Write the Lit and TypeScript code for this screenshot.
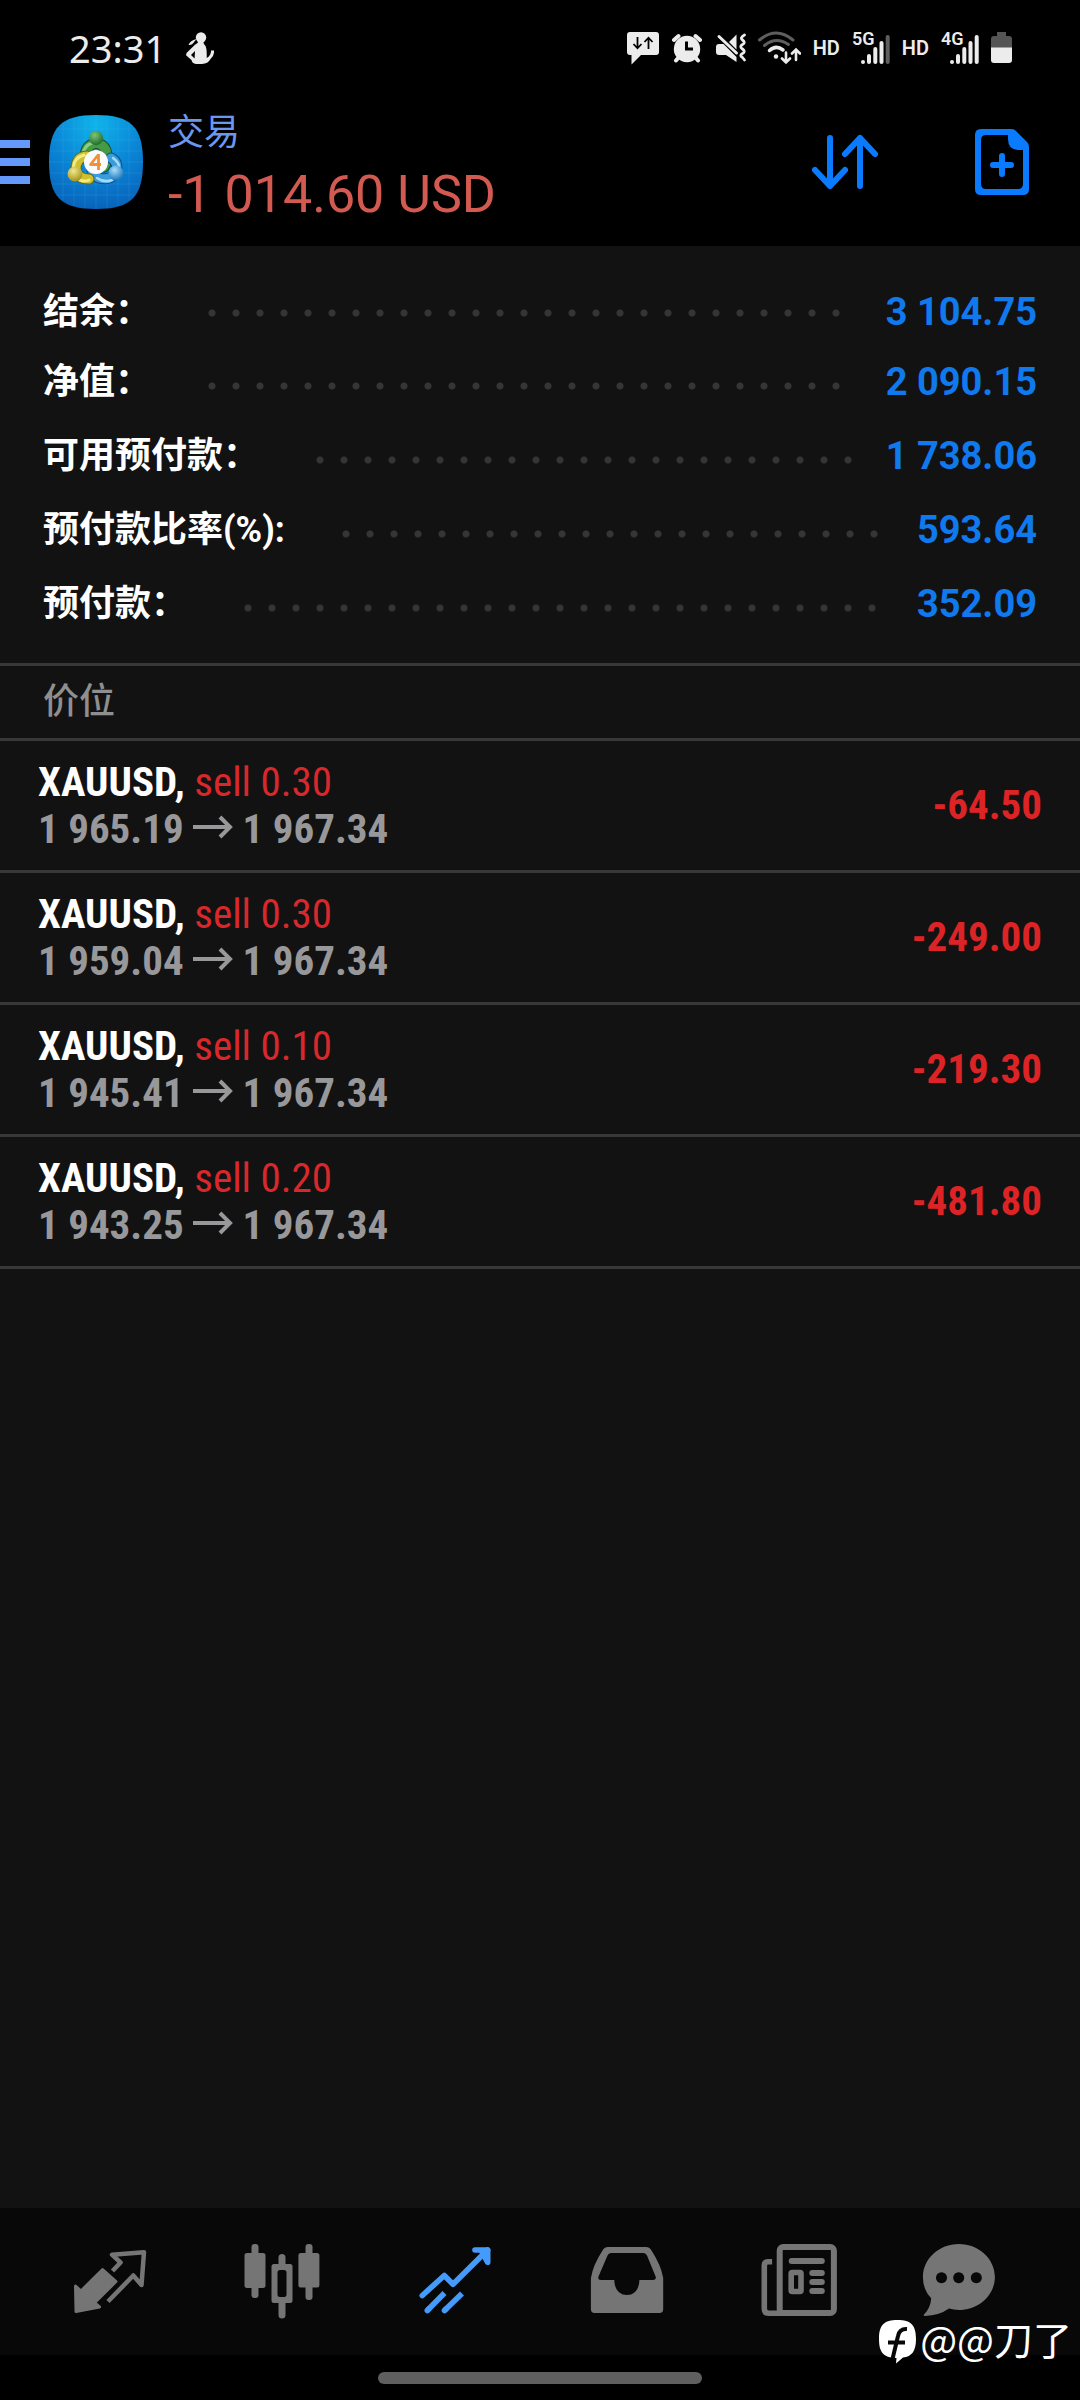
import { LitElement, html, css, svg } from "lit";
import { customElement } from "lit/decorators.js";

interface SummaryRow {
  label: string;
  value: string;
}

interface Position {
  symbol: string;
  side: string;
  volume: string;
  open: string;
  current: string;
  profit: string;
}

const SUMMARY: SummaryRow[] = [
  { label: "结余：", value: "3 104.75" },
  { label: "净值：", value: "2 090.15" },
  { label: "可用预付款：", value: "1 738.06" },
  { label: "预付款比率(%):", value: "593.64" },
  { label: "预付款：", value: "352.09" },
];

const POSITIONS: Position[] = [
  { symbol: "XAUUSD,", side: "sell", volume: "0.30", open: "1 965.19", current: "1 967.34", profit: "-64.50" },
  { symbol: "XAUUSD,", side: "sell", volume: "0.30", open: "1 959.04", current: "1 967.34", profit: "-249.00" },
  { symbol: "XAUUSD,", side: "sell", volume: "0.10", open: "1 945.41", current: "1 967.34", profit: "-219.30" },
  { symbol: "XAUUSD,", side: "sell", volume: "0.20", open: "1 943.25", current: "1 967.34", profit: "-481.80" },
];

const NAV = [
  {
    label: "行情",
    active: false,
    icon: svg`
      <path fill="currentColor" stroke="currentColor" stroke-width="3" stroke-linejoin="round"
        d="M15.500 54 L21 59 L42.600 37.600 L56 49.500 L34.600 70.700 L39.500 75 L16 79.500 Z"/>
      <path fill="none" stroke="currentColor" stroke-width="4.500" stroke-linecap="butt" stroke-linejoin="round"
        d="M52.500 39 L60.500 30.500 L52 22.700 L84 20.200 L81.500 53 L73.300 43.500 L48 69.500"/>`,
  },
  {
    label: "图表",
    active: false,
    icon: svg`
      <g fill="currentColor">
        <rect x="12.500" y="21" width="21" height="35" rx="2.500"/><rect x="19.500" y="12" width="7" height="54" rx="3"/>
        <rect x="66.400" y="21" width="21" height="34.500" rx="2.500"/><rect x="73.500" y="12" width="7" height="56" rx="3"/>
        <path d="M42 32 H46.500 V25.500 a3.500 3.500 0 0 1 7 0 V32 H58 a2.500 2.500 0 0 1 2.500 2.500 V68.500 a2.500 2.500 0 0 1 -2.500 2.500 H53.500 V83 a3.500 3.500 0 0 1 -7 0 V71 H42 a2.500 2.500 0 0 1 -2.500 -2.500 V34.500 A2.500 2.500 0 0 1 42 32 Z M48 38 a2.500 2.500 0 0 0 -2.500 2.500 V62.500 a2.500 2.500 0 0 0 2.500 2.500 h4 a2.500 2.500 0 0 0 2.500 -2.500 V40.500 a2.500 2.500 0 0 0 -2.500 -2.500 Z" fill-rule="evenodd"/>
      </g>`,
  },
  {
    label: "交易",
    active: true,
    icon: svg`
      <g fill="none" stroke="currentColor" stroke-width="5.600" stroke-linecap="round" stroke-linejoin="round">
        <path d="M17.300 63.500 L39.300 43.500 L48 52.300 L82.500 18"/>
        <path d="M70 18 H82.700 V30.300 L77 20"/>
        <path d="M22.300 78.500 L24 76.800"/><path d="M39.500 78.500 L41 77"/>
      </g>
      <g fill="none" stroke="currentColor" stroke-width="5.600">
        <path d="M22.300 78.500 L39.500 61"/><path d="M39.500 78.500 L57 61.500"/>
      </g>`,
  },
  {
    label: "历史",
    active: false,
    icon: svg`
      <path fill="currentColor" fill-rule="evenodd"
        d="M31 15 H69 Q72.500 15 74.200 18 Q84 33 86.200 46 V77 Q86.200 81 82.500 81 H17.600 Q13.900 81 13.900 77 V46 Q16 33 25.800 18 Q27.500 15 31 15 Z
           M34 21 Q31.500 21 30.500 23.500 L21.500 44.500 Q20.600 48 24 48 H37.300 C37.500 57 42 63 50 63 S62 57 62.400 48 H76 Q79.600 48 78.600 44.500 L70 23.500 Q69 21 66.500 21 Z"/>`,
  },
  {
    label: "新闻",
    active: false,
    icon: svg`
      <g fill="none" stroke="currentColor">
        <rect x="30.700" y="15" width="54.200" height="66" rx="3.500" stroke-width="6"/>
        <path stroke-width="5.600" d="M23.100 29.800 H19 Q15.300 29.800 15.300 34 V77 Q15.300 81.200 20 81.200 H34"/>
        <rect x="42.200" y="40.500" width="9.800" height="19" rx="1" stroke-width="5.600"/>
        <g stroke-width="6" stroke-linecap="round">
          <path d="M42.700 29 H72.800"/><path d="M63.300 41 H72.800"/><path d="M63.300 50 H72.800"/><path d="M63.300 59 H72.800"/>
        </g>
      </g>`,
  },
  {
    label: "消息",
    active: false,
    icon: svg`
      <path fill="currentColor" fill-rule="evenodd"
        d="M36.900 12 C56.800 12 72.900 26.800 72.900 45 S56.800 78 36.900 78 Q31.500 78 27 76.600 Q17 83.800 3 84 Q.5 84 2.600 81.700 Q8.500 76 9.200 66.300 Q.9 57.500 .9 45 C.9 26.800 17 12 36.900 12 Z
           M19.500 40.200 a5.500 5.500 0 1 0 .01 0 Z M36.700 40.200 a5.500 5.500 0 1 0 .01 0 Z M54.300 40.200 a5.500 5.500 0 1 0 .01 0 Z"/>`,
  },
];

@customElement("status-bar")
export class StatusBar extends LitElement {
  static styles = css`
    :host { display: block; }
    .bar {
      display: flex;
      align-items: center;
      justify-content: space-between;
      height: 96px;
      padding: 0 68px 0 69px;
      color: #ececec;
      font-family: "Noto Sans", Roboto, sans-serif;
    }
    .side { display: flex; align-items: center; gap: 12px; }
    .time { font-size: 38px; line-height: 48px; }
    .left { gap: 20px; }
    .hd { font: 600 20px/32px Roboto, "Liberation Sans", sans-serif; }
    svg { display: block; flex: none; }
    .net { font: 600 18px Roboto, "Liberation Sans", sans-serif; }
  `;

  private signal(name: string, lastOpacity: number) {
    return html`<svg width="38" height="46" viewBox="0 -6 38 46" role="img" aria-label="${name}">
      <text class="net" x="0" y="14" fill="currentColor">${name}</text>
      <g stroke="currentColor" stroke-width="4" stroke-linecap="round">
        <path d="M11 31 v.01"/><path d="M17 25 V31"/><path d="M23.300 18 V31"/><path d="M29.500 12 V31"/>
        <path d="M35.700 6 V31" stroke-opacity="${lastOpacity}"/>
      </g>
    </svg>`;
  }

  render() {
    return html`
      <div class="bar">
        <div class="side left">
          <span class="time">23:31</span>
          <svg width="28" height="32" viewBox="0 0 28 32" fill="currentColor" aria-hidden="true">
            <circle cx="15" cy="5.500" r="5.200"/>
            <path d="M10.500 7 Q4 8.500 2.500 13 Q6 13.500 8.500 9.500 Z"/>
            <path d="M12.500 9 h4.500 q.5 3 2.500 5 q1.500 3 1.200 12 q4.500 -2.500 4.300 -7.500 h3 q.5 5.500 -3.500 8.500 q-2.500 4.800 -8.500 5 H10 q-4 -.5 -4.500 -4 L.300 23.500 q-.5 -1.500 .7 -3 L9 12.800 q3 -1 3.500 -3.800 Z M9 19 L5 23 L8.600 26.500 Z" fill-rule="evenodd"/>
          </svg>
        </div>
        <div class="side">
          <svg width="33" height="34" viewBox="0 0 33 34" aria-hidden="true">
            <path fill="currentColor" d="M3 1 H29 Q32 1 32 4 V21 Q32 24 29 24 H14 L4.500 33.500 V24 H3 Q0 24 0 21 V4 Q0 1 3 1 Z"/>
            <path fill="none" stroke="#000" stroke-width="1.800" d="M10.500 6 V17 M6.500 13 L10.500 17.300 L14.500 13 M21.500 18 V7 M17.500 11 L21.500 6.700 L25.500 11"/>
          </svg>
          <svg width="30" height="34" viewBox="0 0 30 34" aria-hidden="true">
            <g fill="none" stroke="currentColor" stroke-width="4" stroke-linecap="round">
              <path d="M2 9 L6.500 5 M28 9 L23.500 5 M7 26 L4 29.500 M23 26 L26 29.500"/>
            </g>
            <circle cx="15" cy="18" r="13.200" fill="currentColor"/>
            <path d="M14.500 10.500 V18 H21" fill="none" stroke="#000" stroke-width="3"/>
          </svg>
          <svg width="32" height="34" viewBox="0 0 32 34" aria-hidden="true">
            <path fill="currentColor" d="M15 11 L22.500 3.500 V18.500 Z M5 13 H9.500 L22.500 26 V31 L12 24 H5 Q2 24 2 21 V16 Q2 13 5 13 Z"/>
            <path fill="none" stroke="currentColor" stroke-width="3" stroke-linecap="round" d="M5 5.500 L22.500 22"/>
            <path fill="none" stroke="currentColor" stroke-width="2.800" stroke-linecap="round" stroke-linejoin="round" d="M30.500 4 Q25.500 6.800 28.500 9 Q32 11.500 28.500 13.500 Q25 15.500 28.500 18 Q32 20.500 28.500 22.500 Q25 24.500 28.500 26.500 L30.500 29"/>
          </svg>
          <svg width="43" height="34" viewBox="0 0 43 34" fill="none" stroke="currentColor" stroke-linecap="round" aria-hidden="true">
            <path d="M1.500 9 Q18 -5 35 9" stroke-width="3" stroke-opacity=".4"/>
            <path d="M6.500 14.500 Q18 5 30.500 13.500" stroke-width="3" stroke-opacity=".4"/>
            <path d="M11.500 19.500 Q18 13.500 25 19" stroke-width="3.500"/>
            <circle cx="18" cy="25.500" r="2.200" fill="currentColor" stroke="none"/>
            <path d="M28 21.500 V31.500 M24 27.500 L28 31.500 L32 27.500 M38 29 V18.500 M34 22.500 L38 18.500 L42 22.500" stroke-width="2.600"/>
          </svg>
          <span class="hd">HD</span>
          ${this.signal("5G", 0.4)}
          <span class="hd">HD</span>
          ${this.signal("4G", 1)}
          <svg width="21" height="34" viewBox="0 0 21 34" aria-hidden="true">
            <path fill="#555" d="M6 1 H15 V5 H18 Q21 5 21 8 V17 H0 V8 Q0 5 3 5 H6 Z"/>
            <path fill="currentColor" d="M0 16.500 H21 V29 Q21 32 18 32 H3 Q0 32 0 29 Z"/>
          </svg>
        </div>
      </div>
    `;
  }
}

@customElement("app-root")
export class AppRoot extends LitElement {
  static styles = css`
    :host {
      display: flex;
      flex-direction: column;
      min-height: 100vh;
      background: #121212;
      color: #fff;
      font-family: Roboto, "Noto Sans CJK SC", sans-serif;
    }
    button, a { font: inherit; color: inherit; text-decoration: none; }
    button { border: 0; padding: 0; background: none; cursor: pointer; }
    svg { display: block; }

    .top { background: #000; }
    .header {
      display: flex;
      align-items: flex-start;
      min-height: 135px;
      padding: 15px 38px 0 0;
      box-sizing: content-box;
    }
    .slot { display: flex; align-items: center; height: 102px; }
    .menu { flex-direction: column; align-items: stretch; justify-content: center; gap: 10px; width: 30px; }
    .stripe { height: 8px; background: #6498fb; }
    .logo { margin: 0 25px 0 19px; }
    .heading { flex: 1; display: flex; flex-direction: column; gap: 8px; min-width: 0; }
    .title { margin: 0; font-size: 36px; line-height: 44px; font-weight: 400; color: #6c97f0; }
    .amount { font-size: 52px; line-height: 64px; color: #d35a50; white-space: nowrap; }
    .actions { display: flex; gap: 62px; color: #0a7bff; }

    .summary { margin: 0; padding: 33px 43px 17px; }
    .line { display: flex; align-items: center; height: 64px; padding-bottom: 10px; font-weight: 700; }
    .line:first-child { height: 66px; padding-bottom: 5px; }
    .label { font-size: 36px; line-height: 48px; white-space: nowrap; }
    .leader {
      flex: 1;
      display: flex;
      flex-wrap: wrap;
      height: 8px;
      margin: 8px 16px 0 49px;
      overflow: hidden;
      align-self: center;
    }
    .line:first-child .leader { margin-top: 2px; }
    .dot { width: 24px; height: 8px; background: radial-gradient(circle at center, #353535 3px, transparent 4px); }
    .value { margin: 0; font-size: 38px; line-height: 48px; color: #1079ee; white-space: nowrap; }

    .section {
      margin: 0;
      padding: 0 43px;
      border: solid #383838;
      border-width: 3px 0;
      font-size: 36px;
      line-height: 72px;
      font-weight: 500;
      color: #8f8f8f;
    }
    .positions { margin: 0; padding: 0; list-style: none; }
    .position {
      display: flex;
      align-items: center;
      justify-content: space-between;
      width: 100%;
      height: 132px;
      padding: 0 38px;
      border-bottom: 3px solid #383838;
      box-sizing: border-box;
      font-family: "Roboto Condensed", "Liberation Sans Narrow", Roboto, sans-serif;
      font-size: 41px;
      line-height: 47px;
      font-weight: 700;
      text-align: left;
    }
    .deal, .prices { display: block; white-space: nowrap; }
    .side { font-weight: 400; color: #d8282b; }
    .prices { color: #98989b; }
    .arrow { display: inline-block; vertical-align: baseline; }
    .profit { color: #dc2426; }

    .spacer { flex: 1; }
    .nav {
      display: grid;
      grid-template-columns: repeat(6, 1fr);
      padding: 0 22px 0 24px;
      height: 147px;
      background: #080808;
    }
    .tab { display: flex; align-items: center; justify-content: center; color: #757575; }
    .active { color: #449bfb; }
    .foot { display: flex; justify-content: center; padding: 17px 0 16px; background: #000; position: relative; }
    .pill { width: 30%; height: 12px; border-radius: 6px; background: #5f5f5f; }
    .mark {
      position: absolute;
      right: 8px;
      bottom: 26px;
      display: flex;
      align-items: center;
      gap: 3px;
      font: 400 39px/56px "Noto Sans CJK SC", sans-serif;
      color: #fff;
    }
    .author { padding-bottom: 8px; }
  `;

  render() {
    return html`
      <div class="top">
        <status-bar></status-bar>
        <header class="header">
          <button class="slot menu" aria-label="菜单">
            <span class="stripe"></span><span class="stripe"></span><span class="stripe"></span>
          </button>
          <div class="slot logo">${this.logo()}</div>
          <div class="heading">
            <h1 class="title">交易</h1>
            <span class="amount">-1 014.60 USD</span>
          </div>
          <div class="actions">
            <button class="slot" aria-label="排序">
              <svg width="90" height="90" viewBox="0 0 90 90" fill="none" stroke="currentColor" stroke-width="6" stroke-linecap="round" stroke-linejoin="round">
                <path d="M30 21 V69 M15 53 L30 69 L45 53 M60 69 V21 M45 37 L60 21 L75 37"/>
              </svg>
            </button>
            <button class="slot" aria-label="新订单">
              <svg width="90" height="90" viewBox="0 0 90 90">
                <path fill="currentColor" fill-rule="evenodd" d="M29 12 H60 Q62 12 64 14 L75 25 Q77 27 77 30 V72 Q77 78 71 78 H29 Q23 78 23 72 V18 Q23 12 29 12 Z M34 18 Q29 18 29 23 V67 Q29 72 34 72 H66 Q71 72 71 67 V33 H67 Q56 33 56 22 V18 Z"/>
                <path fill="none" stroke="currentColor" stroke-width="6" stroke-linecap="round" d="M50 39 V57 M41 48 H59"/>
              </svg>
            </button>
          </div>
        </header>
      </div>

      <dl class="summary">
        ${SUMMARY.map(
          (row) => html`<div class="line">
            <dt class="label">${row.label}</dt>
            <span class="leader" aria-hidden="true">${Array.from({ length: 80 }, () => html`<i class="dot"></i>`)}</span>
            <dd class="value">${row.value}</dd>
          </div>`
        )}
      </dl>

      <h2 class="section">价位</h2>
      <ul class="positions">
        ${POSITIONS.map(
          (p) => html`<li>
            <button class="position">
              <span>
                <span class="deal">${p.symbol} <span class="side">${p.side} ${p.volume}</span></span>
                <span class="prices">${p.open} ${this.arrow()} ${p.current}</span>
              </span>
              <span class="profit">${p.profit}</span>
            </button>
          </li>`
        )}
      </ul>
      <div class="spacer"></div>

      <nav class="nav">
        ${NAV.map(
          (n) => html`<a class="tab ${n.active ? "active" : ""}" href="#" aria-label=${n.label}>
            <svg width="100" height="100" viewBox="0 0 100 100">${n.icon}</svg>
          </a>`
        )}
      </nav>
      <div class="foot">
        <div class="pill"></div>
        <div class="mark">
          <svg width="38" height="44" viewBox="0 0 38 44" aria-hidden="true">
            <path fill="currentColor" d="M18.500 0 C32 0 37 5 37 19 C37 31 33 36.500 24 37.500 L17 43.500 L17.500 38 C4 37.500 0 32 0 19 C0 5 5 0 18.500 0 Z"/>
            <path fill="none" stroke="#080808" stroke-width="4" d="M28 9 Q20.500 8.500 19 16 L13.500 39 M9 22.500 H26"/>
          </svg>
          <span class="author">@@刀了</span>
        </div>
      </div>
    `;
  }

  private arrow() {
    return html`<svg class="arrow" width="40" height="32" viewBox="0 0 40 32" role="img" aria-label="→">
      <path fill="none" stroke="currentColor" stroke-width="4" d="M0 16 H37 M27 6 L37 16 L27 26"/>
    </svg>`;
  }

  private logo() {
    return html`<svg width="94" height="94" viewBox="3 3 94 94" role="img" aria-label="MetaTrader 4">
      <defs>
        <radialGradient id="sky" cx=".5" cy=".1" r=".95">
          <stop offset="0" stop-color="#0fb4ea"/><stop offset=".5" stop-color="#0a86d6"/><stop offset="1" stop-color="#0860b8"/>
        </radialGradient>
        <radialGradient id="gb" cx=".4" cy=".3" r=".7"><stop offset="0" stop-color="#7fc476"/><stop offset="1" stop-color="#1f6e2c"/></radialGradient>
        <radialGradient id="yb" cx=".4" cy=".3" r=".7"><stop offset="0" stop-color="#f3e98c"/><stop offset="1" stop-color="#a3931c"/></radialGradient>
        <radialGradient id="bb" cx=".4" cy=".3" r=".7"><stop offset="0" stop-color="#a6defa"/><stop offset="1" stop-color="#1c78bd"/></radialGradient>
      </defs>
      <path fill="url(#sky)" d="M50 3 C85 3 97 15 97 50 S85 97 50 97 S3 85 3 50 S15 3 50 3 Z"/>
      <path stroke="#5cc3f4" stroke-opacity=".16" stroke-width="1" fill="none" d="M17 12 V88 M28 6 V94 M39 4 V96 M50 3 V97 M61 4 V96 M72 6 V94 M83 12 V88 M12 17 H88 M6 28 H94 M4 39 H96 M3 50 H97 M4 61 H96 M6 72 H94 M12 83 H88"/>
      <g fill="none" stroke-linecap="round">
        <path stroke="#12512c" stroke-width="11" d="M39 46 Q39 33 50 31 Q61 33 61 45 Q61 51 58 55"/>
        <path stroke="#469a45" stroke-width="9" d="M39 46 Q39 33 50 31 Q61 33 61 45 Q61 51 58 55"/>
        <path stroke="#8bcf86" stroke-width="3" d="M37 42 Q38 34 46 31"/>
        <path stroke="#114d86" stroke-width="11" d="M65 46 Q73 50 70 61 Q64 69 53 66 Q47 63 46 58"/>
        <path stroke="#3a9bdd" stroke-width="9" d="M65 46 Q73 50 70 61 Q64 69 53 66 Q47 63 46 58"/>
        <path stroke="#a4dcf8" stroke-width="2.500" d="M67 46 Q74 51 73 57 M66 68 Q58 71 51 66"/>
        <path stroke="#5f6a16" stroke-width="11" d="M41 44 Q30 45 30 57 Q31 67 43 67"/>
        <path stroke="#cfc030" stroke-width="9" d="M41 44 Q30 45 30 57 Q31 67 43 67"/>
        <path stroke="#f2ea86" stroke-width="3" d="M38 43 Q28 46 27.500 55 M34 68 Q39 70 43 68"/>
      </g>
      <circle cx="50" cy="26" r="7.200" fill="url(#gb)"/>
      <circle cx="29" cy="62" r="7.500" fill="url(#yb)"/>
      <circle cx="70" cy="61" r="7.500" fill="url(#bb)"/>
      <circle cx="50" cy="50" r="12" fill="#fafafa"/>
      <path fill="none" stroke="#f0913a" stroke-width="2.800" stroke-linejoin="round" d="M52.500 42.500 L44.500 52.500 H55 M52.500 42 V58"/>
    </svg>`;
  }
}
